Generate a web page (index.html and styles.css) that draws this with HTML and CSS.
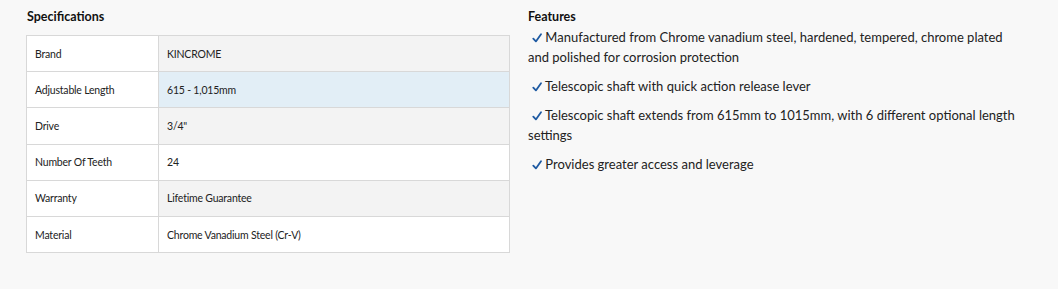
FILE: index.html
```html
<!DOCTYPE html>
<html lang="en">
<head>
<meta charset="utf-8">
<link rel="stylesheet" href="styles.css">
</head>
<body>
<div class="page">
  <section class="specs">
    <h2 class="title">Specifications</h2>
    <table class="spec-table">
      <tr class="stripe"><td class="label">Brand</td><td class="value">KINCROME</td></tr>
      <tr class="hover"><td class="label">Adjustable Length</td><td class="value">615 - 1,015mm</td></tr>
      <tr class="stripe"><td class="label">Drive</td><td class="value">3/4"</td></tr>
      <tr><td class="label">Number Of Teeth</td><td class="value">24</td></tr>
      <tr class="stripe"><td class="label">Warranty</td><td class="value">Lifetime Guarantee</td></tr>
      <tr><td class="label">Material</td><td class="value">Chrome Vanadium Steel (Cr-V)</td></tr>
    </table>
  </section>
  <section class="features">
    <h2 class="title">Features</h2>
    <ul class="feature-list">
      <li><svg class="check" viewBox="0 0 10 10"><path d="M1.3 5.6 L3.9 8.4 L9 1.2"/></svg> Manufactured from Chrome vanadium steel, hardened, tempered, chrome plated and polished for corrosion protection</li>
      <li><svg class="check" viewBox="0 0 10 10"><path d="M1.3 5.6 L3.9 8.4 L9 1.2"/></svg> Telescopic shaft with quick action release lever</li>
      <li><svg class="check" viewBox="0 0 10 10"><path d="M1.3 5.6 L3.9 8.4 L9 1.2"/></svg> Telescopic shaft extends from 615mm to 1015mm, with 6 different optional length settings</li>
      <li><svg class="check" viewBox="0 0 10 10"><path d="M1.3 5.6 L3.9 8.4 L9 1.2"/></svg> Provides greater access and leverage</li>
    </ul>
  </section>
</div>
</body>
</html>
```
FILE: styles.css
```css
html, body {
  margin: 0;
  padding: 0;
  background: #f8f8f8;
  font-family: "Lato", "Liberation Sans", sans-serif;
  color: #222;
}
.page {
  display: flex;
  gap: 18px;
  padding: 8px 0 0 26px;
}
.specs {
  width: 484px;
  flex: none;
}
.title {
  margin: 0 0 9px 1px;
  font-size: 12.5px;
  line-height: 18px;
  font-weight: 700;
  color: #111;
}
.spec-table {
  width: 100%;
  border-collapse: collapse;
  font-size: 10.5px;
  letter-spacing: -0.2px;
  background: #fff;
}
.spec-table td {
  border: 1px solid #d8d8d8;
  height: 36.2px;
  padding: 0 8px;
  line-height: 14px;
  vertical-align: middle;
  box-sizing: border-box;
}
.spec-table .label {
  width: 132px;
  background: #fff;
}
.spec-table tr.stripe .value {
  background: #f3f3f3;
}
.spec-table tr.hover .value {
  background: #e2eef6;
}
.features {
  flex: 1;
}
.features .title {
  margin: 0 0 1px 0;
}
.feature-list {
  list-style: none;
  margin: 0;
  padding: 0;
  font-size: 13px;
  line-height: 20px;
  max-width: 490px;
}
.feature-list li {
  margin-bottom: 9px;
}
.check {
  width: 10px;
  height: 10px;
  margin-left: 4px;
  vertical-align: -1px;
  fill: none;
  stroke: #1e5aa2;
  stroke-width: 1.8;
  stroke-linecap: round;
  stroke-linejoin: round;
}
```
